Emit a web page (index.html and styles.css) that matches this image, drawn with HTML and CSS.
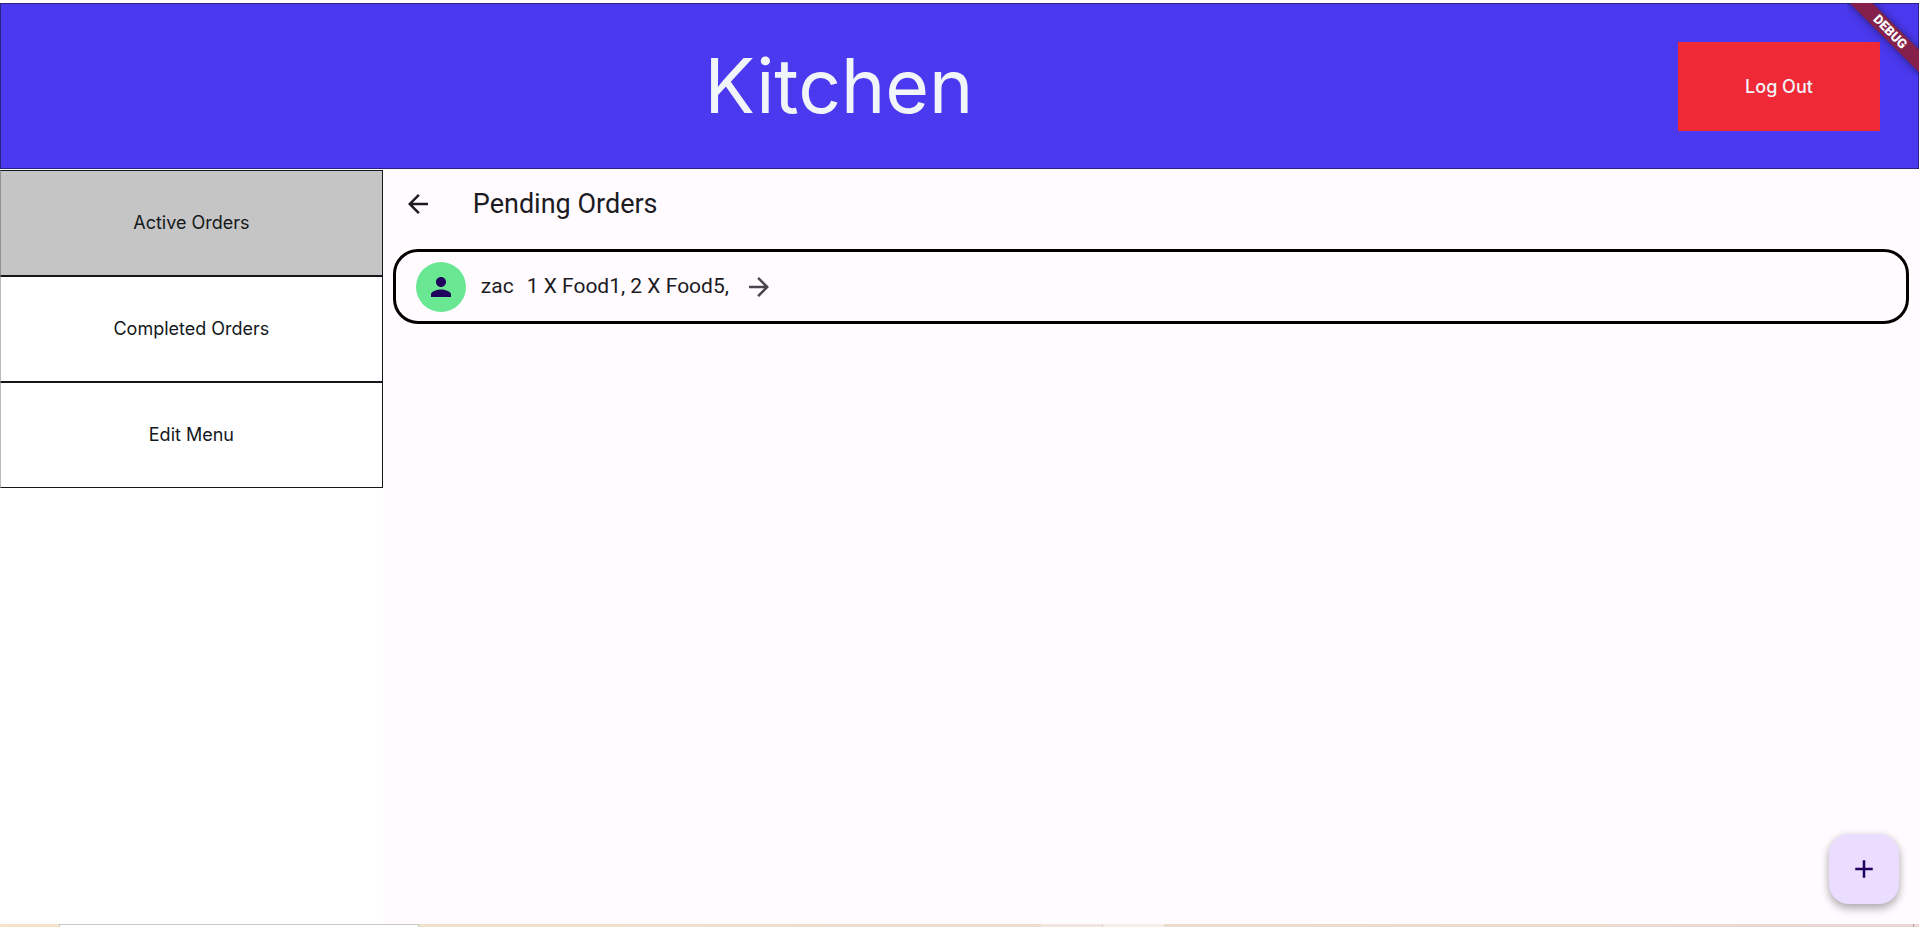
FILE: index.html
```html
<!DOCTYPE html>
<html lang="en">
<head>
<meta charset="utf-8">
<title>Kitchen</title>
<link rel="stylesheet" href="styles.css">
</head>
<body>
<div class="app">
  <header class="header">
    <h1 class="title">Kitchen</h1>
    <button class="logout" type="button">Log Out</button>
    <div class="banner"><span class="banner-band">DEBUG</span></div>
  </header>
  <div class="body">
    <nav class="sidebar">
      <button class="nav-item nav-item-active" type="button">Active Orders</button>
      <button class="nav-item" type="button">Completed Orders</button>
      <button class="nav-item" type="button">Edit Menu</button>
    </nav>
    <main class="main">
      <div class="toolbar">
        <button class="back" type="button" aria-label="Back">
          <svg class="icon" viewBox="0 0 24 24"><path d="M20 11H7.83l5.59-5.59L12 4l-8 8 8 8 1.41-1.41L7.83 13H20z"/></svg>
        </button>
        <h2 class="heading">Pending Orders</h2>
      </div>
      <ul class="orders">
        <li class="order">
          <span class="avatar"><svg class="icon" viewBox="0 0 24 24"><path d="M12 12c2.21 0 4-1.79 4-4s-1.790-4-4-4-4 1.790-4 4 1.790 4 4 4zm0 2c-2.670 0-8 1.340-8 4v2h16v-2c0-2.660-5.330-4-8-4z"/></svg></span>
          <span class="order-text"><span>zac</span><span>1 X Food1, 2 X Food5,</span></span>
          <button class="order-open" type="button" aria-label="Open order">
            <svg class="icon" viewBox="0 0 24 24"><path d="M12 4l-1.410 1.410L16.170 11H4v2h12.170l-5.580 5.590L12 20l8-8z"/></svg>
          </button>
        </li>
      </ul>
      <button class="add" type="button" aria-label="Add order">
        <svg class="icon" viewBox="0 0 24 24"><path d="M19 13h-6v6h-2v-6H5v-2h6V5h2v6h6z"/></svg>
      </button>
    </main>
  </div>
  <footer class="edge"><span class="edge-field"></span><span class="edge-tab"></span><span class="edge-tab edge-tab-light"></span><span class="edge-end"></span></footer>
</div>
</body>
</html>
```
FILE: styles.css
```css
* { box-sizing: border-box; }
body { margin: 0; background: #fff; color: #1c1b1f; font-family: Roboto, sans-serif; }
button { margin: 0; padding: 0; border: 0; background: none; font: inherit; color: inherit; }
.app { display: flex; flex-direction: column; min-height: 100vh; padding-top: 3px; }
.header {
  position: relative;
  display: flex;
  align-items: center;
  min-height: 166px;
  padding-right: 39px;
  background: #4b39ef;
  box-shadow: inset 0 0 0 1px #2a2380;
}
.title { flex: 1; margin: 0; text-align: center; font: 400 75px/88px Inter, sans-serif; color: #f1f4f8; }
.logout { width: 202px; height: 89px; padding-top: 1px; background: #ef2935; color: #f1f4f8; font: 500 18px/24px Inter, sans-serif; }
.banner { position: absolute; top: 0; right: 0; width: 72px; height: 72px; overflow: hidden; }
.banner-band {
  position: absolute;
  left: -17px;
  top: 21px;
  width: 120px;
  height: 16px;
  transform: rotate(45deg);
  background: #84204a;
  box-shadow: 0 0 8px rgba(0, 0, 0, 0.5);
  color: #fff;
  text-align: center;
  font: 900 13px/16px Roboto, sans-serif;
}
.body { flex: 1; display: flex; }
.sidebar { width: calc(20% - 1px); padding-top: 1px; background: #fff; }
.nav-item {
  display: block;
  width: 100%;
  height: 106px;
  border: 1px solid #14181b;
  border-left-color: #b9babb;
  background: #fff;
  color: #14181b;
  font: 400 18px/24px Inter, sans-serif;
}
.nav-item-active { background: #c5c5c5; border-left-color: #919293; }
.main { position: relative; flex: 1; background: #fffbff; }
.toolbar { display: flex; align-items: center; height: 70px; padding-left: 20px; gap: 40px; }
.icon { display: block; width: 30px; height: 30px; fill: currentColor; }
.back { width: 30px; height: 30px; }
.heading { margin: 0; font-size: 27px; line-height: 36px; font-weight: 400; }
.orders { margin: 0; padding: 10px; list-style: none; }
.order { display: flex; align-items: center; height: 75px; padding: 0 20px; border: 3px solid #000; border-radius: 25px; }
.avatar { display: grid; place-items: center; width: 50px; height: 50px; border-radius: 50%; background: #6ae792; color: #21005d; }
.order-text { display: flex; gap: 13px; margin-left: 15px; padding-bottom: 2px; font-size: 21px; line-height: 30px; }
.order-open { margin-left: 15px; color: #49454f; }
.add {
  position: absolute;
  right: 20px;
  bottom: 20px;
  display: grid;
  place-items: center;
  width: 70px;
  height: 70px;
  border-radius: 20px;
  background: #eaddff;
  color: #21005d;
  box-shadow: 0 5px 8px rgba(0, 0, 0, 0.25), 0 1px 10px rgba(0, 0, 0, 0.12);
}
.edge {
  display: grid;
  grid-template-columns: 59px 360px 1fr 61px 62px 749px 6px;
  height: 3px;
  background: linear-gradient(90deg, #f3e4c8, #ecdccf 60%, #ecd7d2);
}
.edge-field { grid-column: 2; border: 1px solid #c8c8c8; border-bottom: 0; background: #fff; }
.edge-tab { grid-column: 4; background: #f3e6df; }
.edge-tab-light { grid-column: 5; background: #f7eeea; border-left: 1px solid #dccfc8; }
.edge-end { grid-column: 7; border-left: 1px solid #b0a09c; }
```
